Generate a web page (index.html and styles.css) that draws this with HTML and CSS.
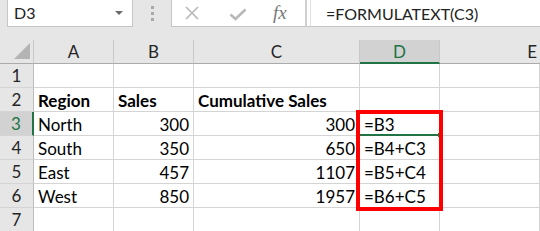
FILE: index.html
```html
<!DOCTYPE html>
<html lang="en">
<head>
    <meta charset="UTF-8">
    <title>FORMULATEXT</title>
    <link rel="stylesheet" href="styles.css">
</head>
<body>
    <div class="toolbar">
        <div class="namebox">
            <span>D3</span>
            <span class="caret"></span>
        </div>
        <div class="grip"><i></i><i></i><i></i></div>
        <div class="fbar">
            <div class="fbtns">
                <svg class="ico-x" width="14" height="14" viewBox="0 0 14 14"><path d="M1 1L13 13M13 1L1 13" stroke="#b8b8b8" stroke-width="1.6" fill="none"/></svg>
                <svg class="ico-ok" width="18" height="13" viewBox="0 0 18 13"><path d="M1.5 6.5L6.5 11L16.5 1.5" stroke="#b8b8b8" stroke-width="2.6" fill="none"/></svg>
                <span class="fx">fx</span>
            </div>
            <div class="ftext">=FORMULATEXT(C3)</div>
        </div>
    </div>

    <div class="sheet">
        <div class="grid">
            <div class="hd corner"><span class="tri"></span></div>
            <div class="hd col">A</div>
            <div class="hd col">B</div>
            <div class="hd col">C</div>
            <div class="hd col sel">D</div>
            <div class="hd col last">E</div>

            <div class="hd row">1</div>
            <div class="c"></div><div class="c"></div><div class="c"></div><div class="c"></div><div class="c"></div>

            <div class="hd row">2</div>
            <div class="c b">Region</div><div class="c b">Sales</div><div class="c b">Cumulative Sales</div><div class="c"></div><div class="c"></div>

            <div class="hd row sel">3</div>
            <div class="c">North</div><div class="c num">300</div><div class="c num">300</div><div class="c">=B3</div><div class="c"></div>

            <div class="hd row">4</div>
            <div class="c">South</div><div class="c num">350</div><div class="c num">650</div><div class="c">=B4+C3</div><div class="c"></div>

            <div class="hd row">5</div>
            <div class="c">East</div><div class="c num">457</div><div class="c num">1107</div><div class="c">=B5+C4</div><div class="c"></div>

            <div class="hd row">6</div>
            <div class="c">West</div><div class="c num">850</div><div class="c num">1957</div><div class="c">=B6+C5</div><div class="c"></div>

            <div class="hd row">7</div>
            <div class="c"></div><div class="c"></div><div class="c"></div><div class="c"></div><div class="c"></div>
        </div>
        <div class="active"><span class="handle"></span></div>
        <div class="mark"></div>
    </div>
</body>
</html>
```

FILE: styles.css
```css
body {
    margin: 0;
    width: 540px;
    height: 231px;
    overflow: hidden;
    background: #fff;
    font-family: Lato, "Liberation Sans", sans-serif;
    font-size: 17px;
    color: #000;
}

/* barra de fórmulas */
.toolbar {
    height: 40px;
    background: #e6e6e6;
    display: flex;
    align-items: flex-start;
    font-size: 16px;
}
.namebox {
    margin-left: 7px;
    width: 126px;
    height: 27px;
    box-sizing: border-box;
    background: #fff;
    border: 1px solid #c6c6c6;
    border-top: none;
    display: flex;
    align-items: center;
    justify-content: space-between;
    padding: 0 9px 1px 6px;
    color: #222;
}
.caret {
    width: 0;
    height: 0;
    border-left: 4px solid transparent;
    border-right: 4px solid transparent;
    border-top: 4px solid #6a6a6a;
}
.grip {
    width: 38px;
    height: 27px;
    display: flex;
    flex-direction: column;
    align-items: center;
    justify-content: center;
    gap: 3px;
}
.grip i {
    width: 3px;
    height: 3px;
    background: #a9a9a9;
}
.fbar {
    flex: 1;
    height: 27px;
    box-sizing: border-box;
    background: #fff;
    border-left: 1px solid #c6c6c6;
    border-bottom: 1px solid #c6c6c6;
    display: flex;
    align-items: center;
}
.fbtns {
    width: 135px;
    height: 100%;
    box-sizing: border-box;
    border-right: 2px solid #d0d0d0;
    display: flex;
    align-items: center;
}
.ico-x { margin-left: 13px; }
.ico-ok { margin-left: 30px; margin-top: 2px; }
.fx {
    margin-left: 26px;
    font-family: "Liberation Serif", serif;
    font-style: italic;
    font-size: 19px;
    color: #777;
}
.ftext {
    height: 100%;
    box-sizing: border-box;
    border-left: 1px solid #e0e0e0;
    margin-left: 3px;
    padding-left: 15px;
    display: flex;
    align-items: center;
    color: #222;
}

/* hoja */
.sheet {
    position: relative;
}
.grid {
    display: grid;
    grid-template-columns: 34px 80px 80px 166px 80px 1fr;
    grid-auto-rows: 24px;
}
.grid > div {
    box-sizing: border-box;
    display: flex;
    align-items: flex-end;
    white-space: nowrap;
}
.hd {
    background: #e6e6e6;
    color: #262626;
    justify-content: center;
}
.col {
    border-right: 1px solid #c8c8c8;
    border-bottom: 1px solid #ababab;
    padding-bottom: 1px;
}
.col.last {
    border-right: none;
    justify-content: flex-end;
    padding-right: 3px;
}
.corner {
    border-right: 1px solid #c8c8c8;
    border-bottom: 1px solid #ababab;
    position: relative;
}
.tri {
    position: absolute;
    right: 3px;
    bottom: 4px;
    width: 0;
    height: 0;
    border-left: 16px solid transparent;
    border-bottom: 16px solid #b4b4b4;
}
.row {
    border-right: 1px solid #bdbdbd;
    border-bottom: 1px solid #d4d4d4;
    padding-bottom: 1px;
}
.hd.sel {
    background: #d2d2d2;
    color: #217346;
}
.col.sel { border-bottom: 2px solid #217346; padding-bottom: 0; }
.row.sel { border-right: 2px solid #217346; }
.c {
    border-right: 1px solid #d4d4d4;
    border-bottom: 1px solid #d4d4d4;
    padding: 0 4px 0 4px;
}
.c.b { font-weight: bold; }
.c.num { justify-content: flex-end; }

/* celda activa */
.active {
    position: absolute;
    left: 360px;
    top: 94px;
    width: 78px;
    height: 2px;
    background: #217346;
}
.handle {
    position: absolute;
    right: -4px;
    top: -1px;
    width: 4px;
    height: 4px;
    background: #217346;
}

/* recuadro rojo */
.mark {
    position: absolute;
    left: 356px;
    top: 70px;
    width: 87px;
    height: 101px;
    box-sizing: border-box;
    border: 4px solid #ff0000;
}
```
